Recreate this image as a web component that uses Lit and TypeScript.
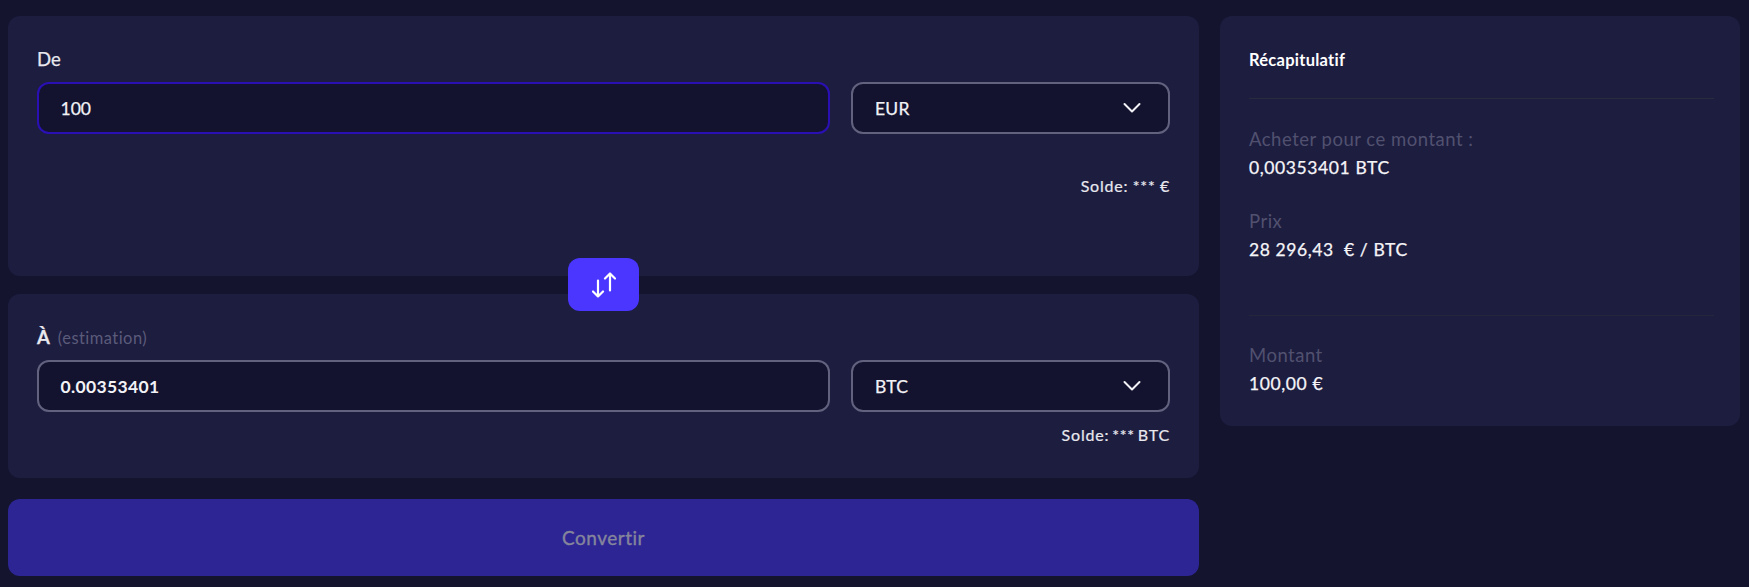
import { LitElement, html, css } from "lit";
import { customElement } from "lit/decorators.js";

const chevron = html`<svg class="chev" width="20" height="12" viewBox="0 0 20 12" fill="none"><path d="M2.5 2 L10 9.5 L17.5 2" stroke="#f2f2f6" stroke-width="2" stroke-linecap="round" stroke-linejoin="round"/></svg>`;

@customElement("app-root")
export class AppRoot extends LitElement {
  static styles = css`
    :host { display: block; width: 1749px; height: 587px; background: #14142f; font-family: "Lato", "Liberation Sans", sans-serif; color: #f2f2f6; overflow: hidden; }
    * { box-sizing: border-box; }
    .page { display: grid; grid-template-columns: 1191px 520px; column-gap: 21px; padding: 16px 0 0 8px; align-items: start; }
    .left { display: flex; flex-direction: column; position: relative; }
    .card { background: #1d1d40; border-radius: 12px; }
    .from { height: 260px; padding: 0 29px; margin-bottom: 18px; }
    .to { height: 184px; padding: 0 29px; margin-bottom: 21px; }
    .label { font-size: 18.5px; line-height: 22px; color: #e8e8ee; -webkit-text-stroke: 0.25px #e8e8ee; }
    .from .label { padding-top: 32px; height: 66px; }
    .to .label { padding-top: 32px; height: 66px; display: flex; gap: 8px; align-items: baseline; }
    .strong { font-weight: 700; }
    .hint { font-size: 16.5px; color: #5b5b7a; letter-spacing: 0.45px; -webkit-text-stroke: 0; }
    .row { display: grid; grid-template-columns: 793px 319px; column-gap: 21px; width: 1133px; }
    .box { height: 52px; background: #131330; border: 2px solid #62627f; border-radius: 12px; display: flex; align-items: center; padding: 0 21.5px; font-size: 17.5px; -webkit-text-stroke: 0.25px #f2f2f6; }
    .box.focus { border-color: #2a10b4; }
    .box.bold { font-weight: 700; letter-spacing: 0.35px; -webkit-text-stroke: 0; }
    .box.select { justify-content: space-between; padding: 0 26px 0 22px; letter-spacing: 0.2px; }
    .chev { display: block; }
    .balance { text-align: right; font-size: 16px; line-height: 18px; color: #e8e8ee; letter-spacing: 0.8px; word-spacing: -2px; -webkit-text-stroke: 0.2px #e8e8ee; }
    .from .balance { margin-top: 43px; word-spacing: -0.5px; }
    .to .balance { margin-top: 14px; }
    .swap { position: absolute; left: 560px; top: 242px; width: 71px; height: 53px; background: #4a36ff; border: none; border-radius: 12px; display: flex; align-items: center; justify-content: center; padding: 0; }
    .convert { height: 77px; background: #2e2595; border-radius: 12px; display: flex; align-items: center; justify-content: center; font-size: 19px; color: #85859b; letter-spacing: 0.5px; -webkit-text-stroke: 0.35px #85859b; }
    .summary { height: 410px; padding: 0 26px 0 29px; }
    .title { height: 83px; padding-top: 35px; border-bottom: 1px solid #292a3e; font-size: 16.5px; line-height: 18px; font-weight: 700; color: #fff; letter-spacing: 0.25px; }
    .item { display: flex; flex-direction: column; }
    .k { font-size: 18.5px; line-height: 22px; color: #51516f; letter-spacing: 0.5px; }
    .v { font-size: 17.5px; line-height: 22px; color: #f5f5f8; margin-top: 7px; letter-spacing: 0.6px; -webkit-text-stroke: 0.25px #f5f5f8; }
    .first { margin-top: 29px; }
    .second { margin-top: 31px; }
    .sep { height: 1px; background: #25263c; margin-top: 54px; }
    .third { margin-top: 28px; }
  `;

  render() {
    return html`
      <div class="page">
        <div class="left">
          <section class="card from">
            <div class="label">De</div>
            <div class="row">
              <div class="box focus">100</div>
              <div class="box select"><span>EUR</span>${chevron}</div>
            </div>
            <div class="balance">Solde: *** €</div>
          </section>
          <section class="card to">
            <div class="label"><span class="strong">À</span><span class="hint">(estimation)</span></div>
            <div class="row">
              <div class="box bold">0.00353401</div>
              <div class="box select"><span>BTC</span>${chevron}</div>
            </div>
            <div class="balance">Solde: *** BTC</div>
          </section>
          <button class="swap" aria-label="Inverser">
            <svg width="24" height="26" viewBox="0 0 24 26" fill="none" stroke="#fff" stroke-width="2.2" stroke-linecap="round" stroke-linejoin="round">
              <path d="M6 8.5 V24.5 M1 19.5 L6 24.5 L11 19.5"/>
              <path d="M18 18.5 V1.5 M13 6.5 L18 1.5 L23 6.5"/>
            </svg>
          </button>
          <div class="convert">Convertir</div>
        </div>
        <aside class="card summary">
          <div class="title">Récapitulatif</div>
          <div class="item first"><span class="k">Acheter pour ce montant :</span><span class="v">0,00353401 BTC</span></div>
          <div class="item second"><span class="k">Prix</span><span class="v">28\u202F296,43 &nbsp;€ / BTC</span></div>
          <div class="sep"></div>
          <div class="item third"><span class="k">Montant</span><span class="v">100,00 €</span></div>
        </aside>
      </div>
    `;
  }
}
